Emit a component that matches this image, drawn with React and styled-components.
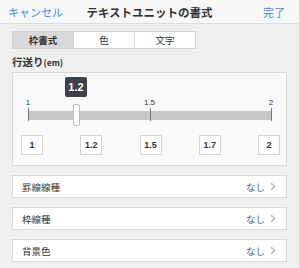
import React from 'react';
import styled, { createGlobalStyle } from 'styled-components';

const GlobalStyle = createGlobalStyle`
  html, body {
    margin: 0;
    padding: 0;
    background: #efefef;
  }
  body {
    font-family: "Noto Sans CJK JP", "Liberation Sans", sans-serif;
    color: #333;
  }
`;

const Window = styled.div`
  width: 300px;
  height: 268px;
  box-sizing: border-box;
  background: #efefef;
  border-right: 1px solid #d6d6d6;
  overflow: hidden;
`;

const Header = styled.header`
  height: 23px;
  background: #f7f7f7;
  border-bottom: 1px solid #dcdcdc;
  display: grid;
  grid-template-columns: 1fr auto 1fr;
  align-items: center;
  padding: 0 14px 0 8px;
`;

const HeaderButton = styled.button`
  border: none;
  background: none;
  padding: 0;
  font-family: inherit;
  font-size: 11px;
  color: #3d8ff0;
  cursor: pointer;
  justify-self: ${p => (p.$end ? 'end' : 'start')};
`;

const Title = styled.h1`
  margin: 0 0 0 6px;
  font-size: 11.5px;
  font-weight: bold;
  color: #333;
`;

const Body = styled.div`
  padding: 7px 12px 0 12px;
`;

const Segmented = styled.div`
  display: flex;
  width: 182px;
  height: 16px;
  border: 1px solid #d4d4d4;
  background: #fff;
`;

const Segment = styled.div`
  flex: 1;
  display: flex;
  align-items: center;
  justify-content: center;
  font-size: 9.5px;
  color: #333;
  background: ${p => (p.$active ? '#d9d9d9' : '#fff')};
  font-weight: ${p => (p.$active ? 'bold' : 'normal')};
  & + & {
    border-left: 1px solid #d4d4d4;
  }
`;

const Label = styled.div`
  margin-top: 6px;
  font-size: 10.5px;
  font-weight: bold;
  color: #333;
  line-height: 14px;
`;

const Small = styled.span`
  font-size: 8.5px;
`;

const Panel = styled.div`
  margin-top: 3px;
  height: 94px;
  box-sizing: border-box;
  background: #f9f9f9;
  border: 1px solid #d9d9d9;
  padding: 4px 6px 0 7px;
`;

const SliderArea = styled.div`
  position: relative;
  height: 58px;
`;

const Tooltip = styled.div`
  position: absolute;
  left: 45px;
  top: 0;
  width: 22px;
  height: 20px;
  border-radius: 2px;
  background: #3b4148;
  color: #fff;
  font-family: "Liberation Sans", sans-serif;
  font-weight: bold;
  font-size: 11px;
  display: flex;
  align-items: center;
  justify-content: center;
`;

const Track = styled.div`
  position: absolute;
  left: 8px;
  right: 9px;
  top: 34px;
  height: 9px;
  background: #c7c7c7;
`;

const Tick = styled.div`
  position: absolute;
  top: -3px;
  width: 1px;
  height: 13px;
  background: #777;
  left: ${p => p.$pos}%;
`;

const TickLabel = styled.span`
  position: absolute;
  top: -10px;
  left: 0;
  transform: translateX(-50%);
  font-family: "Liberation Sans", sans-serif;
  font-size: 8px;
  line-height: 9px;
  color: #333;
`;

const Thumb = styled.div`
  position: absolute;
  left: 53px;
  top: 27px;
  width: 7px;
  height: 22px;
  box-sizing: border-box;
  background: #fff;
  border: 1px solid #bcbcbc;
  border-radius: 2px;
`;

const Presets = styled.div`
  display: flex;
  justify-content: space-between;
  padding: 0 0 0 1px;
`;

const Preset = styled.div`
  width: 22px;
  height: 20px;
  box-sizing: border-box;
  background: #fff;
  border: 1px solid #d4d4d4;
  display: flex;
  align-items: center;
  justify-content: center;
  font-family: "Liberation Sans", sans-serif;
  font-size: 9px;
  font-weight: bold;
  color: #333;
`;

const Rows = styled.div`
  margin-top: 9px;
  display: flex;
  flex-direction: column;
  gap: 9px;
`;

const Row = styled.div`
  height: 23px;
  box-sizing: border-box;
  background: #fff;
  border: 1px solid #d9d9d9;
  display: flex;
  align-items: center;
  justify-content: space-between;
  padding: 0 10px 0 9px;
  font-size: 9.5px;
  color: #333;
`;

const RowValue = styled.span`
  display: flex;
  align-items: center;
  gap: 5px;
  color: #555;
`;

const Chevron = () => (
  <svg width="6" height="9" viewBox="0 0 6 9">
    <path d="M1 1 L4.5 4.5 L1 8" fill="none" stroke="#b8b8b8" strokeWidth="1.6" />
  </svg>
);

const ticks = [
  { pos: 0, label: '1' },
  { pos: 50, label: '1.5' },
  { pos: 100, label: '2' },
];

const presets = ['1', '1.2', '1.5', '1.7', '2'];
const rows = ['罫線線種', '枠線種', '背景色'];

export default function App() {
  return (
    <Window>
      <GlobalStyle />
      <Header>
        <HeaderButton>キャンセル</HeaderButton>
        <Title>テキストユニットの書式</Title>
        <HeaderButton $end>完了</HeaderButton>
      </Header>
      <Body>
        <Segmented>
          <Segment $active>枠書式</Segment>
          <Segment>色</Segment>
          <Segment>文字</Segment>
        </Segmented>
        <Label>
          行送り<Small>(em)</Small>
        </Label>
        <Panel>
          <SliderArea>
            <Tooltip>1.2</Tooltip>
            <Track>
              {ticks.map(t => (
                <Tick key={t.label} $pos={t.pos}>
                  <TickLabel>{t.label}</TickLabel>
                </Tick>
              ))}
            </Track>
            <Thumb />
          </SliderArea>
          <Presets>
            {presets.map(p => (
              <Preset key={p}>{p}</Preset>
            ))}
          </Presets>
        </Panel>
        <Rows>
          {rows.map(r => (
            <Row key={r}>
              <span>{r}</span>
              <RowValue>
                なし
                <Chevron />
              </RowValue>
            </Row>
          ))}
        </Rows>
      </Body>
    </Window>
  );
}
